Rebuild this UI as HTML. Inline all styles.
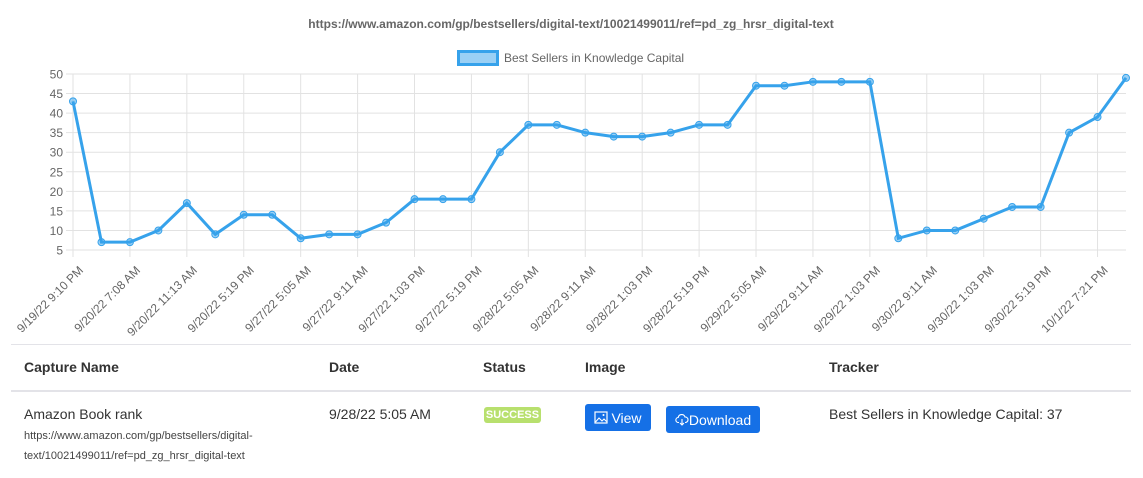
<!DOCTYPE html>
<html><head><meta charset="utf-8"><style>
body{margin:0;width:1143px;height:478px;background:#fff;font-family:"Liberation Sans",sans-serif;position:relative;overflow:hidden}
.a{position:absolute;white-space:nowrap}
.h{font-weight:bold;font-size:14px;color:#333;top:359px}
.btn{position:absolute;background:#1570e6;color:#fff;border-radius:3px;font-size:14px;display:flex;align-items:center;justify-content:center}
</style></head><body>
<svg id="c" width="1143" height="340" style="position:absolute;left:0;top:0" font-family="Liberation Sans, sans-serif"></svg>
<div style="position:absolute;left:11px;top:344px;width:1120px;height:1px;background:#e3e3e8"></div>
<div class="a h" style="left:24px">Capture Name</div>
<div class="a h" style="left:329px">Date</div>
<div class="a h" style="left:483px">Status</div>
<div class="a h" style="left:585px">Image</div>
<div class="a h" style="left:829px">Tracker</div>
<div style="position:absolute;left:11px;top:390px;width:1120px;height:2px;background:#e3e3e8"></div>
<div class="a" style="left:24px;top:406px;font-size:14px;color:#333">Amazon Book rank</div>
<div class="a" style="left:24px;top:430px;font-size:11px;color:#444">https://www.amazon.com/gp/bestsellers/digital-</div>
<div class="a" style="left:24px;top:450px;font-size:11px;color:#444">text/10021499011/ref=pd_zg_hrsr_digital-text</div>
<div class="a" style="left:329px;top:406px;font-size:14px;color:#333">9/28/22 5:05 AM</div>
<div class="a" style="left:484px;top:407px;width:57px;height:16px;background:#b8e06e;border-radius:3px;color:#fff;font-size:11px;font-weight:bold;text-align:center;line-height:17px">SUCCESS</div>
<div class="btn" style="left:585px;top:404px;width:66px;height:27px"><svg width="14" height="13" viewBox="0 0 14 13" style="margin-right:3px"><rect x="1" y="1" width="12" height="11" fill="none" stroke="#fff" stroke-width="1.2"/><path d="M1.5 11 L5 7 L8 10 L10 8 L12.5 10.5" fill="none" stroke="#fff" stroke-width="1.1"/><circle cx="9.5" cy="4" r="1" fill="#fff"/></svg>View</div>
<div class="btn" style="left:666px;top:406px;width:94px;height:27px"><svg width="14" height="13" viewBox="0 0 14 13"><path d="M4 9.5H3.5A2.5 2.5 0 0 1 3.2 4.5 3.5 3.5 0 0 1 10 4 2.7 2.7 0 0 1 10.5 9.5H10 M7 6V12 M5 10L7 12 9 10" fill="none" stroke="#fff" stroke-width="1.1"/></svg>Download</div>
<div class="a" style="left:829px;top:406px;font-size:14px;color:#333">Best Sellers in Knowledge Capital: 37</div>
<script>
var v=[43,7,7,10,17,9,14,14,8,9,9,12,18,18,18,30,37,37,35,34,34,35,37,37,47,47,48,48,48,8,10,10,13,16,16,35,39,49];
var L=["9/19/22 9:10 PM","9/20/22 7:08 AM","9/20/22 11:13 AM","9/20/22 5:19 PM","9/27/22 5:05 AM","9/27/22 9:11 AM","9/27/22 1:03 PM","9/27/22 5:19 PM","9/28/22 5:05 AM","9/28/22 9:11 AM","9/28/22 1:03 PM","9/28/22 5:19 PM","9/29/22 5:05 AM","9/29/22 9:11 AM","9/29/22 1:03 PM","9/30/22 9:11 AM","9/30/22 1:03 PM","9/30/22 5:19 PM","10/1/22 7:21 PM"];
var x0=73,x1=1126,dx=(x1-x0)/37,Y=function(a){return 74+(50-a)*176/45};
var s='<text x="571" y="28" text-anchor="middle" font-size="12" font-weight="bold" fill="#666">https://www.amazon.com/gp/bestsellers/digital-text/10021499011/ref=pd_zg_hrsr_digital-text</text>';
s+='<rect x="458.5" y="51.5" width="39" height="13" fill="rgba(54,162,235,0.5)" stroke="#36a2eb" stroke-width="3"/><text x="504" y="62" font-size="12" fill="#666">Best Sellers in Knowledge Capital</text>';
for(var k=5;k<=50;k+=5){var y=Y(k);s+='<line x1="66" x2="1126" y1="'+y+'" y2="'+y+'" stroke="#e2e2e2"/><text x="63" y="'+(y+4.5)+'" text-anchor="end" font-size="12" fill="#666">'+k+'</text>';}
for(var i=0;i<19;i++){var x=x0+2*i*dx;s+='<line x1="'+x+'" x2="'+x+'" y1="74" y2="257" stroke="#e2e2e2"/><text transform="translate('+(x+11)+',271) rotate(-45)" text-anchor="end" font-size="12" fill="#666">'+L[i]+'</text>';}
var p=v.map(function(a,i){return (x0+i*dx)+','+Y(a)}).join(' ');
s+='<polyline points="'+p+'" fill="none" stroke="#36a2eb" stroke-width="3" stroke-linejoin="miter"/>';
v.forEach(function(a,i){s+='<circle cx="'+(x0+i*dx)+'" cy="'+Y(a)+'" r="3.5" fill="rgba(54,162,235,0.5)" stroke="#36a2eb" stroke-width="1"/>'});
document.getElementById('c').innerHTML=s;
</script>
</body></html>
